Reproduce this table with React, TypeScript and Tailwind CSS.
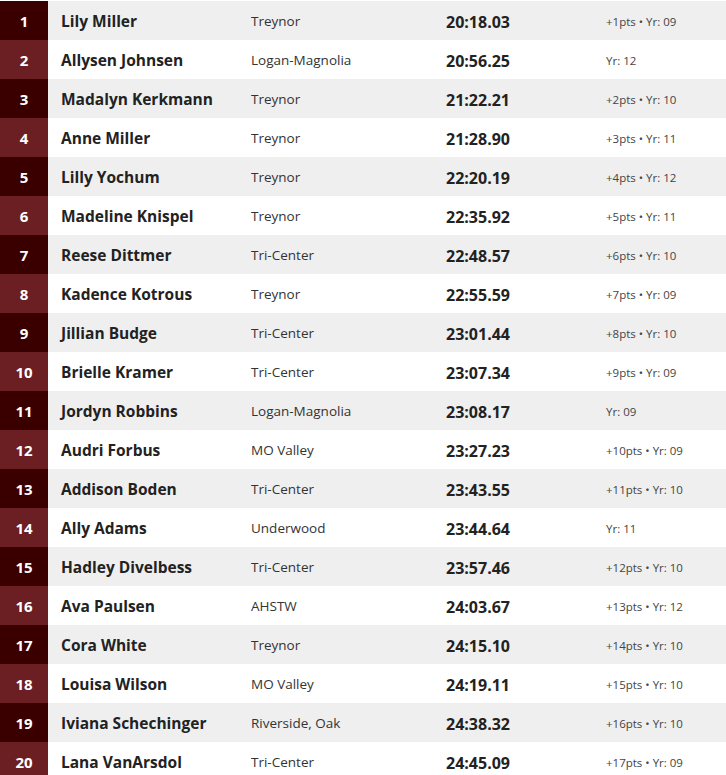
/**
 * Results table
 * Girls varsity finishers with place, school, time and team points
 */

const results = [
  { name: 'Lily Miller', team: 'Treynor', time: '20:18.03', note: '+1pts • Yr: 09' },
  { name: 'Allysen Johnsen', team: 'Logan-Magnolia', time: '20:56.25', note: 'Yr: 12' },
  { name: 'Madalyn Kerkmann', team: 'Treynor', time: '21:22.21', note: '+2pts • Yr: 10' },
  { name: 'Anne Miller', team: 'Treynor', time: '21:28.90', note: '+3pts • Yr: 11' },
  { name: 'Lilly Yochum', team: 'Treynor', time: '22:20.19', note: '+4pts • Yr: 12' },
  { name: 'Madeline Knispel', team: 'Treynor', time: '22:35.92', note: '+5pts • Yr: 11' },
  { name: 'Reese Dittmer', team: 'Tri-Center', time: '22:48.57', note: '+6pts • Yr: 10' },
  { name: 'Kadence Kotrous', team: 'Treynor', time: '22:55.59', note: '+7pts • Yr: 09' },
  { name: 'Jillian Budge', team: 'Tri-Center', time: '23:01.44', note: '+8pts • Yr: 10' },
  { name: 'Brielle Kramer', team: 'Tri-Center', time: '23:07.34', note: '+9pts • Yr: 09' },
  { name: 'Jordyn Robbins', team: 'Logan-Magnolia', time: '23:08.17', note: 'Yr: 09' },
  { name: 'Audri Forbus', team: 'MO Valley', time: '23:27.23', note: '+10pts • Yr: 09' },
  { name: 'Addison Boden', team: 'Tri-Center', time: '23:43.55', note: '+11pts • Yr: 10' },
  { name: 'Ally Adams', team: 'Underwood', time: '23:44.64', note: 'Yr: 11' },
  { name: 'Hadley Divelbess', team: 'Tri-Center', time: '23:57.46', note: '+12pts • Yr: 10' },
  { name: 'Ava Paulsen', team: 'AHSTW', time: '24:03.67', note: '+13pts • Yr: 12' },
  { name: 'Cora White', team: 'Treynor', time: '24:15.10', note: '+14pts • Yr: 10' },
  { name: 'Louisa Wilson', team: 'MO Valley', time: '24:19.11', note: '+15pts • Yr: 10' },
  { name: 'Iviana Schechinger', team: 'Riverside, Oak', time: '24:38.32', note: '+16pts • Yr: 10' },
  { name: 'Lana VanArsdol', team: 'Tri-Center', time: '24:45.09', note: '+17pts • Yr: 09' },
];

export default function App() {
  return (
    <div className="w-[726px] h-[775px] overflow-hidden bg-white pt-px font-['Open_Sans',sans-serif]">
      {results.map((r, i) => {
        const odd = i % 2 === 0;
        return (
          <div
            key={r.name}
            className={`grid grid-cols-[48px_203px_195px_160px_1fr] h-[39px] items-center ${odd ? 'bg-[#efefef]' : 'bg-white'}`}
          >
            {/* Place */}
            <div
              className={`h-full pt-[2px] flex items-center justify-center text-white font-bold text-[15px] ${odd ? 'bg-[#3a0000]' : 'bg-[#6b1f22]'}`}
            >
              {i + 1}
            </div>
            <div className="pl-[13px] pt-[2px] font-bold text-[15.5px] text-[#222]">{r.name}</div>
            <div className="pt-[2px] text-[13.5px] text-[#333]">{r.team}</div>
            <div className="pt-[2px] font-bold text-[16px] text-[#222]">{r.time}</div>
            <div className="pt-[2px] text-[11.5px] text-[#444]">{r.note}</div>
          </div>
        );
      })}
    </div>
  );
}
